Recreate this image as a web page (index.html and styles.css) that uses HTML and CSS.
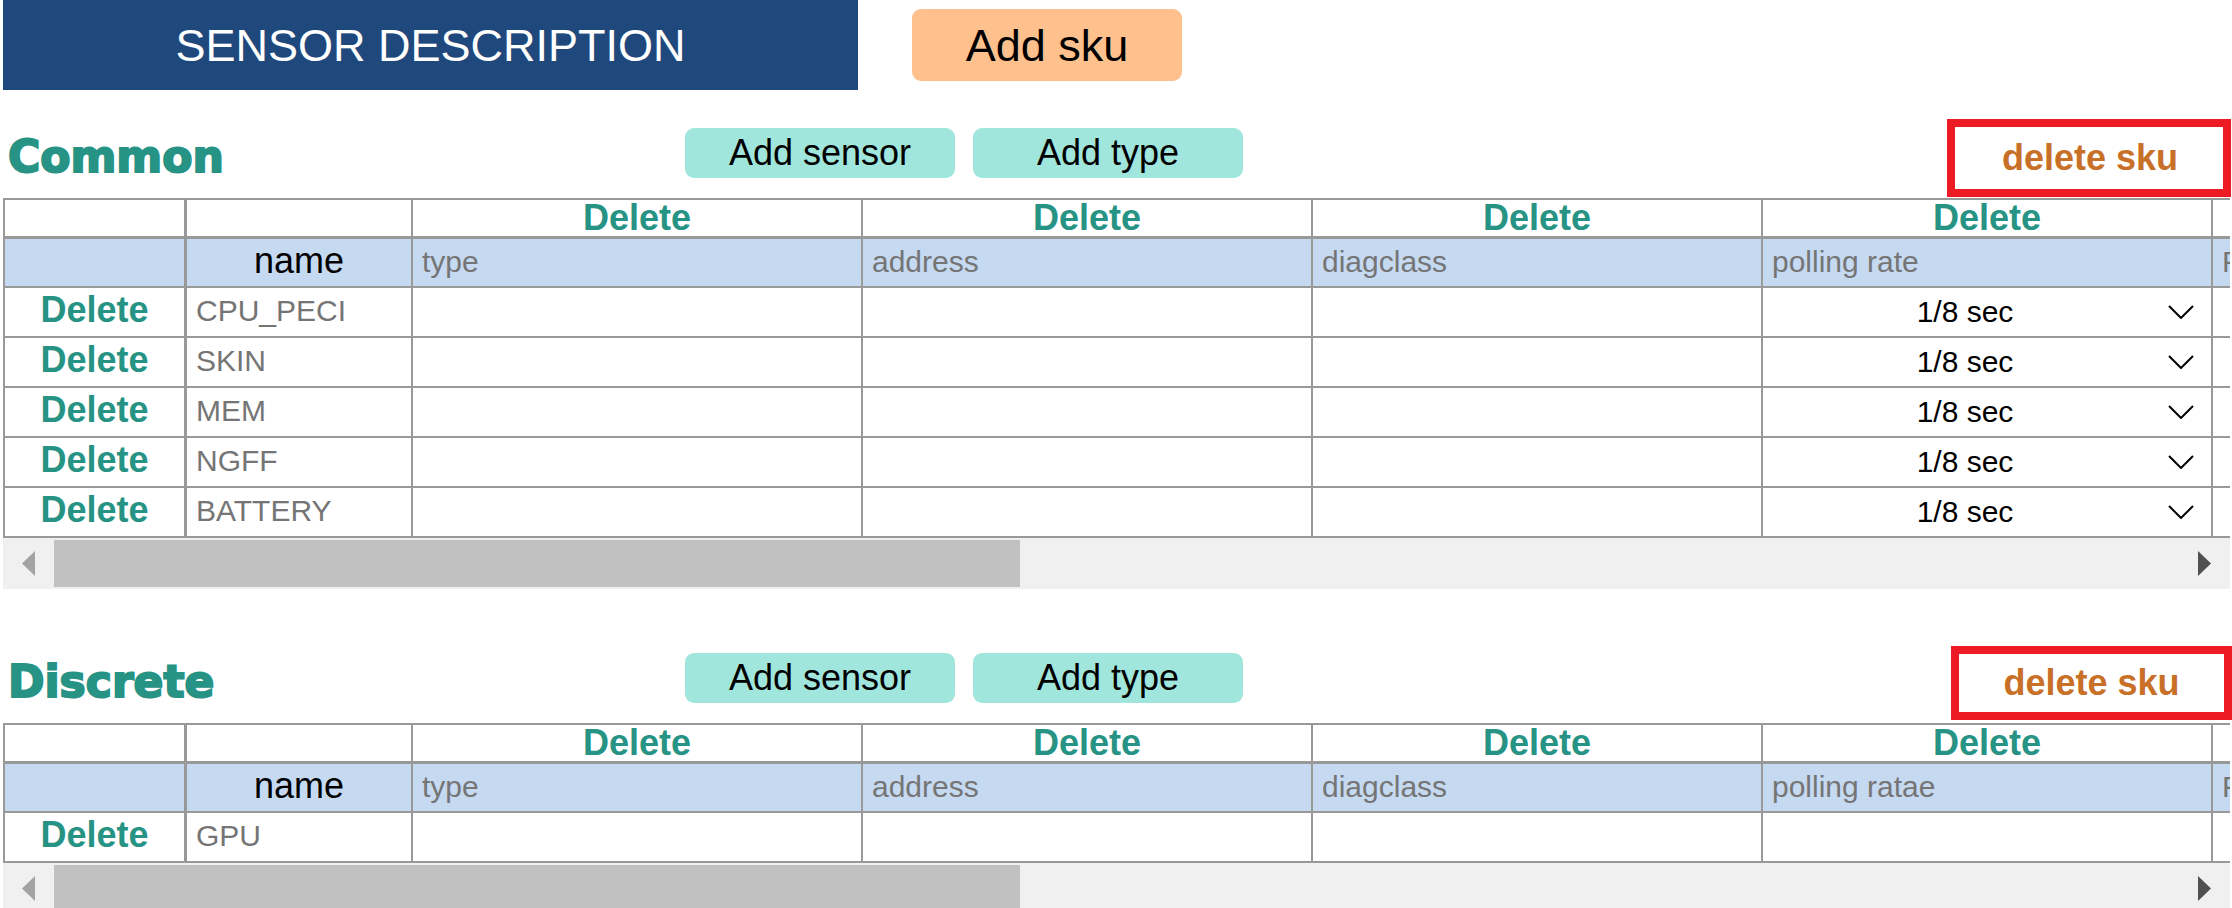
FILE: index.html
```html
<!DOCTYPE html>
<html lang="en">
<head>
<meta charset="utf-8">
<title>Sensor description</title>
<link rel="stylesheet" href="styles.css">
<script src="tables.js" defer></script>
</head>
<body>
<header class="page-head">
  <h1 class="page-title">SENSOR DESCRIPTION</h1>
  <button type="button" class="btn btn-sku">Add sku</button>
</header>
<main class="skus">
  <section class="sku" data-sku="common">
    <div class="sku-head">
      <h2 class="sku-title">Common</h2>
      <div class="sku-actions">
        <button type="button" class="btn btn-add">Add sensor</button>
        <button type="button" class="btn btn-add">Add type</button>
      </div>
      <button type="button" class="btn-delete-sku">delete sku</button>
    </div>
  </section>
  <section class="sku" data-sku="discrete">
    <div class="sku-head">
      <h2 class="sku-title">Discrete</h2>
      <div class="sku-actions">
        <button type="button" class="btn btn-add">Add sensor</button>
        <button type="button" class="btn btn-add">Add type</button>
      </div>
      <button type="button" class="btn-delete-sku btn-delete-sku-short">delete sku</button>
    </div>
  </section>
</main>
</body>
</html>
```

FILE: tables.js
```js
const skus = {
  common: {
    types: ['type', 'address', 'diagclass', 'polling rate', 'F'],
    sensors: ['CPU_PECI', 'SKIN', 'MEM', 'NGFF', 'BATTERY'],
    rates: true
  },
  discrete: {
    types: ['type', 'address', 'diagclass', 'polling ratae', 'F'],
    sensors: ['GPU'],
    rates: false
  }
};

const del = '<button type="button" class="btn-delete">Delete</button>';
const field = (label, value) =>
  `<input class="field" type="text" aria-label="${label}" value="${value}">`;
const rate = (label) =>
  `<div class="rate"><select class="rate-select" aria-label="${label}"><option>1/8 sec</option></select>` +
  '<svg class="rate-arrow" viewBox="0 0 26 14" aria-hidden="true"><path d="M1 1L13 13L25 1"/></svg></div>';

for (const section of document.querySelectorAll('.sku')) {
  const sku = skus[section.dataset.sku];
  const cell = (sensor, i) =>
    sku.rates && i === 3 ? rate(`${sensor} polling rate`) : field(`${sensor} ${sku.types[i]}`, '');
  section.insertAdjacentHTML('beforeend', `
    <div class="table-view">
      <table class="sensors">
        <colgroup><col class="col-delete"><col class="col-name">${sku.types.map(() => '<col class="col-type">').join('')}</colgroup>
        <thead>
          <tr class="row-delete"><td></td><td></td>${sku.types.map((t, i) => `<td>${i < 4 ? del : ''}</td>`).join('')}</tr>
          <tr class="row-types"><td></td><th scope="col">name</th>${sku.types.map((t, i) => `<td>${field('type ' + (i + 1), t)}</td>`).join('')}</tr>
        </thead>
        <tbody>
          ${sku.sensors.map((s) => `<tr class="row-sensor"><td>${del}</td><td>${field('name', s)}</td>${sku.types.map((t, i) => `<td>${cell(s, i)}</td>`).join('')}</tr>`).join('')}
        </tbody>
      </table>
    </div>
    <div class="scroller">
      <svg class="scroll-arrow scroll-left" viewBox="0 0 13 25" aria-hidden="true"><path d="M13 0V25L0 12.5Z"/></svg>
      <div class="scroll-track"><div class="scroll-thumb"></div></div>
      <svg class="scroll-arrow scroll-right" viewBox="0 0 13 25" aria-hidden="true"><path d="M0 0V25L13 12.5Z"/></svg>
    </div>`);
}
```

FILE: styles.css
```css
* { box-sizing: border-box; }

body {
  margin: 0;
  height: 100vh;
  overflow: hidden;
  background: #fff;
  color: #000;
  font-family: "Liberation Sans", Arial, sans-serif;
}

button, input, select {
  font-family: inherit;
  margin: 0;
  padding: 0;
  border: 0;
}

/* Page header */
.page-head {
  display: flex;
  align-items: center;
  gap: 54px;
  padding-left: 3px;
}

.page-title {
  flex: 0 0 855px;
  margin: 0;
  padding-top: 2px;
  background: #1f497d;
  color: #fff;
  font-size: 45px;
  font-weight: 400;
  line-height: 88px;
  text-align: center;
}

.btn {
  width: 270px;
  border-radius: 9px;
  color: #000;
}

.btn-sku {
  height: 72px;
  padding-top: 2px;
  background: #fec18e;
  font-size: 45px;
}

.btn-add {
  height: 50px;
  background: #a0e6dc;
  font-size: 36px;
}

/* One block per sku */
.skus {
  display: flex;
  flex-direction: column;
  gap: 54px;
  padding: 28px 2px 0 3px;
}

.sku-head {
  display: flex;
  align-items: center;
  height: 80px;
  margin-right: -2px;
}

.sku-title {
  flex: 0 0 682px;
  margin: 0;
  padding: 0 0 2px 5px;
  color: #269384;
  font-family: "DejaVu Sans", "Liberation Sans", sans-serif;
  font-size: 44px;
  font-weight: 700;
  line-height: 56px;
  -webkit-text-stroke: 2px #269384;
}

.sku-actions {
  display: flex;
  gap: 18px;
  padding-bottom: 10px;
}

.btn-delete-sku {
  width: 284px;
  height: 78px;
  margin: 0 1px 0 auto;
  padding-left: 2px;
  border: 8px solid #ed1c24;
  background: #fff;
  color: #c87028;
  font-size: 36px;
  font-weight: 700;
}

.btn-delete-sku-short {
  width: 281px;
  height: 74px;
  margin-right: 0;
  padding-left: 0;
}

/* Sensor table */
.table-view { overflow: hidden; }

.sensors {
  width: 2660px;
  table-layout: fixed;
  border-collapse: separate;
  border-spacing: 0;
  border-top: 2px solid #999;
  border-left: 2px solid #999;
}

.col-delete { width: 182px; }
.col-name { width: 226px; }
.col-type { width: 450px; }

.sensors td, .sensors th {
  padding: 0;
  border-right: 2px solid #999;
  border-bottom: 2px solid #999;
  text-align: center;
  vertical-align: middle;
}

.sensors td:first-child { border-right-width: 3px; }
.row-delete { height: 39px; }
.sensors .row-delete td { border-bottom-width: 3px; }
.row-types { height: 49px; background: #c5d9f1; }
.sensors .row-types th {
  padding-bottom: 4px;
  font-size: 36px;
  font-weight: 400;
  line-height: 42px;
}
.row-sensor { height: 50px; }

.btn-delete {
  display: block;
  width: 100%;
  height: 36px;
  background: none;
  color: #269384;
  font-size: 36px;
  font-weight: 700;
  line-height: 36px;
}

.row-sensor .btn-delete { height: 48px; padding-bottom: 4px; }

.field {
  display: block;
  width: 100%;
  height: 46px;
  padding: 0 9px 2px;
  background: none;
  color: #757575;
  font-size: 30px;
}

.rate {
  display: grid;
  align-items: center;
}

.rate-select {
  grid-area: 1 / 1;
  width: 100%;
  height: 46px;
  padding: 0 44px 2px 0;
  appearance: none;
  background: none;
  color: #000;
  font-size: 30px;
  text-align: center;
  text-align-last: center;
}

.rate-arrow {
  grid-area: 1 / 1;
  justify-self: end;
  width: 26px;
  height: 14px;
  margin-right: 17px;
  fill: none;
  stroke: #000;
  stroke-width: 2;
  pointer-events: none;
}

/* Horizontal scroll bar */
.scroller {
  display: flex;
  align-items: center;
  height: 51px;
  background: #f0f0f0;
}

.scroll-arrow { flex: none; width: 13px; height: 25px; }
.scroll-left { margin: 0 19px; fill: #a3a3a3; }
.scroll-right { margin: 0 19px; fill: #505050; }
.scroll-track { flex: 1; }
.scroll-thumb { width: calc(500% / 11); height: 47px; background: #c1c1c1; }
```
